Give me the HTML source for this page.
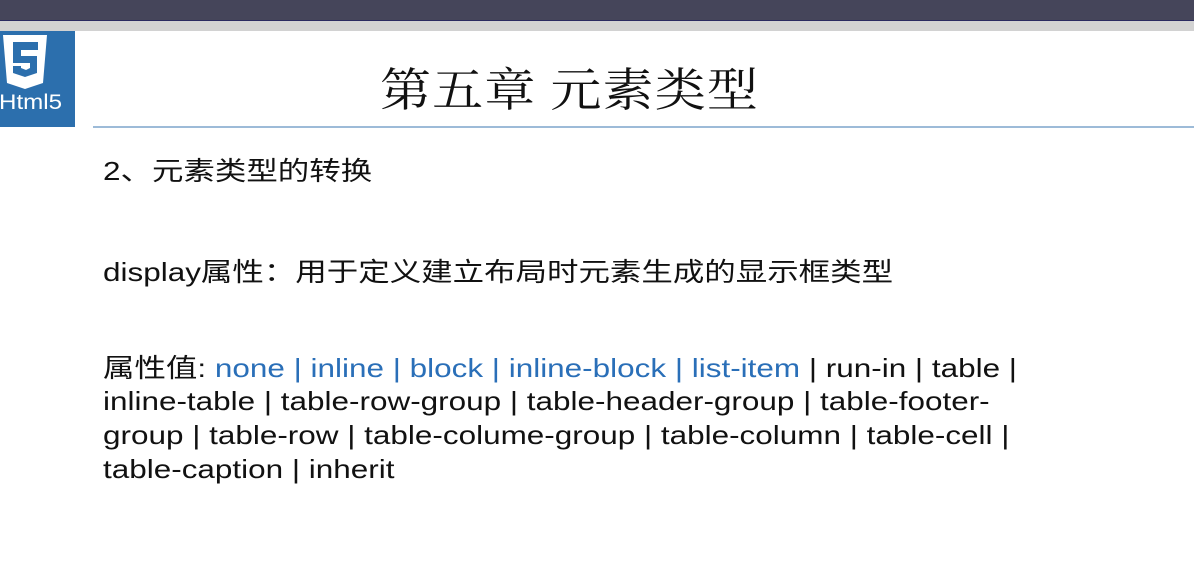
<!DOCTYPE html>
<html><head><meta charset="utf-8"><style>
body{margin:0;width:1194px;height:580px;overflow:hidden;background:#fff;position:relative;font-family:"Liberation Sans","Noto Sans CJK SC",sans-serif;color:#111}
.top{position:absolute;left:0;top:0;width:1194px;height:20px;background:#45455a;border-bottom:1px solid #2a2a60}
.grey{position:absolute;left:0;top:21px;width:1194px;height:10px;background:#d2d2d2}
.logo{position:absolute;left:0;top:31px;width:75px;height:96px;background:#2c6fad}
.logo span{position:absolute;left:-1px;top:60px;color:#fff;font-size:21px;transform:scaleX(1.15);transform-origin:left}
.hr{position:absolute;left:93px;top:126px;width:1101px;height:2px;background:#9dbbd8}
.title{position:absolute;left:380px;top:54px;font-size:46px;font-family:"Liberation Serif","Noto Serif CJK SC",serif;color:#111;letter-spacing:1px;transform:scaleX(1.11);transform-origin:left}
.t{position:absolute;left:103px;font-size:26px;white-space:nowrap;transform:scaleX(1.21);transform-origin:left}
.b{color:#2a6fb8}
</style></head><body>
<div class="top"></div><div class="grey"></div>
<div class="logo">
<svg width="75" height="70" viewBox="0 0 75 70" style="position:absolute;left:0;top:0">
<path d="M3 4 H47 L43 52 L25 58 L7 52 Z" fill="#fff"/>
<path d="M13 11 H38 V19 H21 V25 H37 V42 L25 46 L13 42 V35 H21 V37 L26 39 L30 37 V32 H13 Z" fill="#2c6fad"/>
</svg>
<span>Html5</span></div>
<div class="hr"></div>
<div class="title">第五章 元素类型</div>
<div class="t" style="top:151px">2、元素类型的转换</div>
<div class="t" style="top:252px">display属性：用于定义建立布局时元素生成的显示框类型</div>
<div class="t" style="top:348px">属性值: <span class="b">none | inline | block | inline-block | list-item</span> | run-in | table |</div>
<div class="t" style="top:386px">inline-table | table-row-group | table-header-group | table-footer-</div>
<div class="t" style="top:420px">group | table-row | table-colume-group | table-column | table-cell |</div>
<div class="t" style="top:454px">table-caption | inherit</div>
</body></html>
